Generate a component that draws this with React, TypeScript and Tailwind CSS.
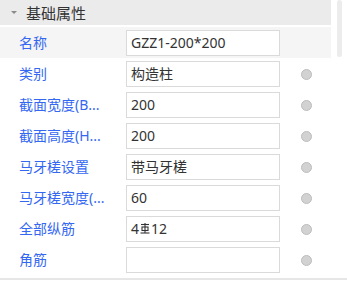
import React from 'react';

type Row = { label: string; value: React.ReactNode; radio: boolean };

const RebarMark: React.FC = () => (
  <svg width="10" height="11" viewBox="0 0 10 11" className="inline-block mx-[1px] -translate-y-[1px]">
    <g stroke="#333" strokeWidth="1.1" fill="none">
      <line x1="1" y1="1.5" x2="9" y2="1.5" />
      <rect x="2" y="4" width="6" height="3.5" />
      <line x1="5" y1="0" x2="5" y2="10" />
      <line x1="0.5" y1="10" x2="9.5" y2="10" />
    </g>
  </svg>
);

const rows: Row[] = [
  { label: '名称', value: 'GZZ1-200*200', radio: false },
  { label: '类别', value: '构造柱', radio: true },
  { label: '截面宽度(B...', value: '200', radio: true },
  { label: '截面高度(H...', value: '200', radio: true },
  { label: '马牙槎设置', value: '带马牙槎', radio: true },
  { label: '马牙槎宽度(...', value: '60', radio: true },
  {
    label: '全部纵筋',
    value: (
      <span className="flex items-center">
        4<RebarMark />12
      </span>
    ),
    radio: true,
  },
  { label: '角筋', value: '', radio: true },
];

export default function App() {
  return (
    <div
      className="w-[347px] h-[282px] bg-white overflow-hidden"
      style={{ fontFamily: '"Noto Sans", "Noto Sans CJK SC", sans-serif' }}
    >
      <div className="flex">
        <div className="w-[331px]">
          {/* group header */}
          <div className="h-[25px] mb-[2px] bg-[#ebebeb] flex items-center">
            <span className="ml-[11px] w-0 h-0 border-l-[3px] border-r-[3px] border-t-[3px] border-l-transparent border-r-transparent border-t-[#8a8a8a]" />
            <span className="ml-[9px] text-[15px] leading-[20px] text-[#333]">基础属性</span>
          </div>

          {rows.map((row, i) => (
            <div
              key={row.label}
              className={`h-[31px] pt-[3px] pb-[2px] flex items-center ${i === 0 ? 'bg-[#f5f5f5]' : ''}`}
            >
              <div className="w-[126px] pl-[19px] whitespace-nowrap text-[14px] leading-[20px] text-[#3467f2]">
                {row.label}
              </div>
              <div className="w-[154px] h-[26px] border border-[#dadada] bg-white flex items-center pl-[4px] text-[14px] leading-[20px] text-[#333]">
                {row.value}
              </div>
              {row.radio && (
                <span className="ml-[21px] w-[11px] h-[11px] rounded-full bg-[#d2d2d2] border border-[#bdbdbd]" />
              )}
            </div>
          ))}
        </div>
        <div className="w-[16px] pl-[6px]">
          <div className="w-[5px] h-[57px] rounded-full bg-[#ececec]" />
        </div>
      </div>
      <div className="mt-[3px] h-[2px] bg-[#e6e6e6]" />
    </div>
  );
}
